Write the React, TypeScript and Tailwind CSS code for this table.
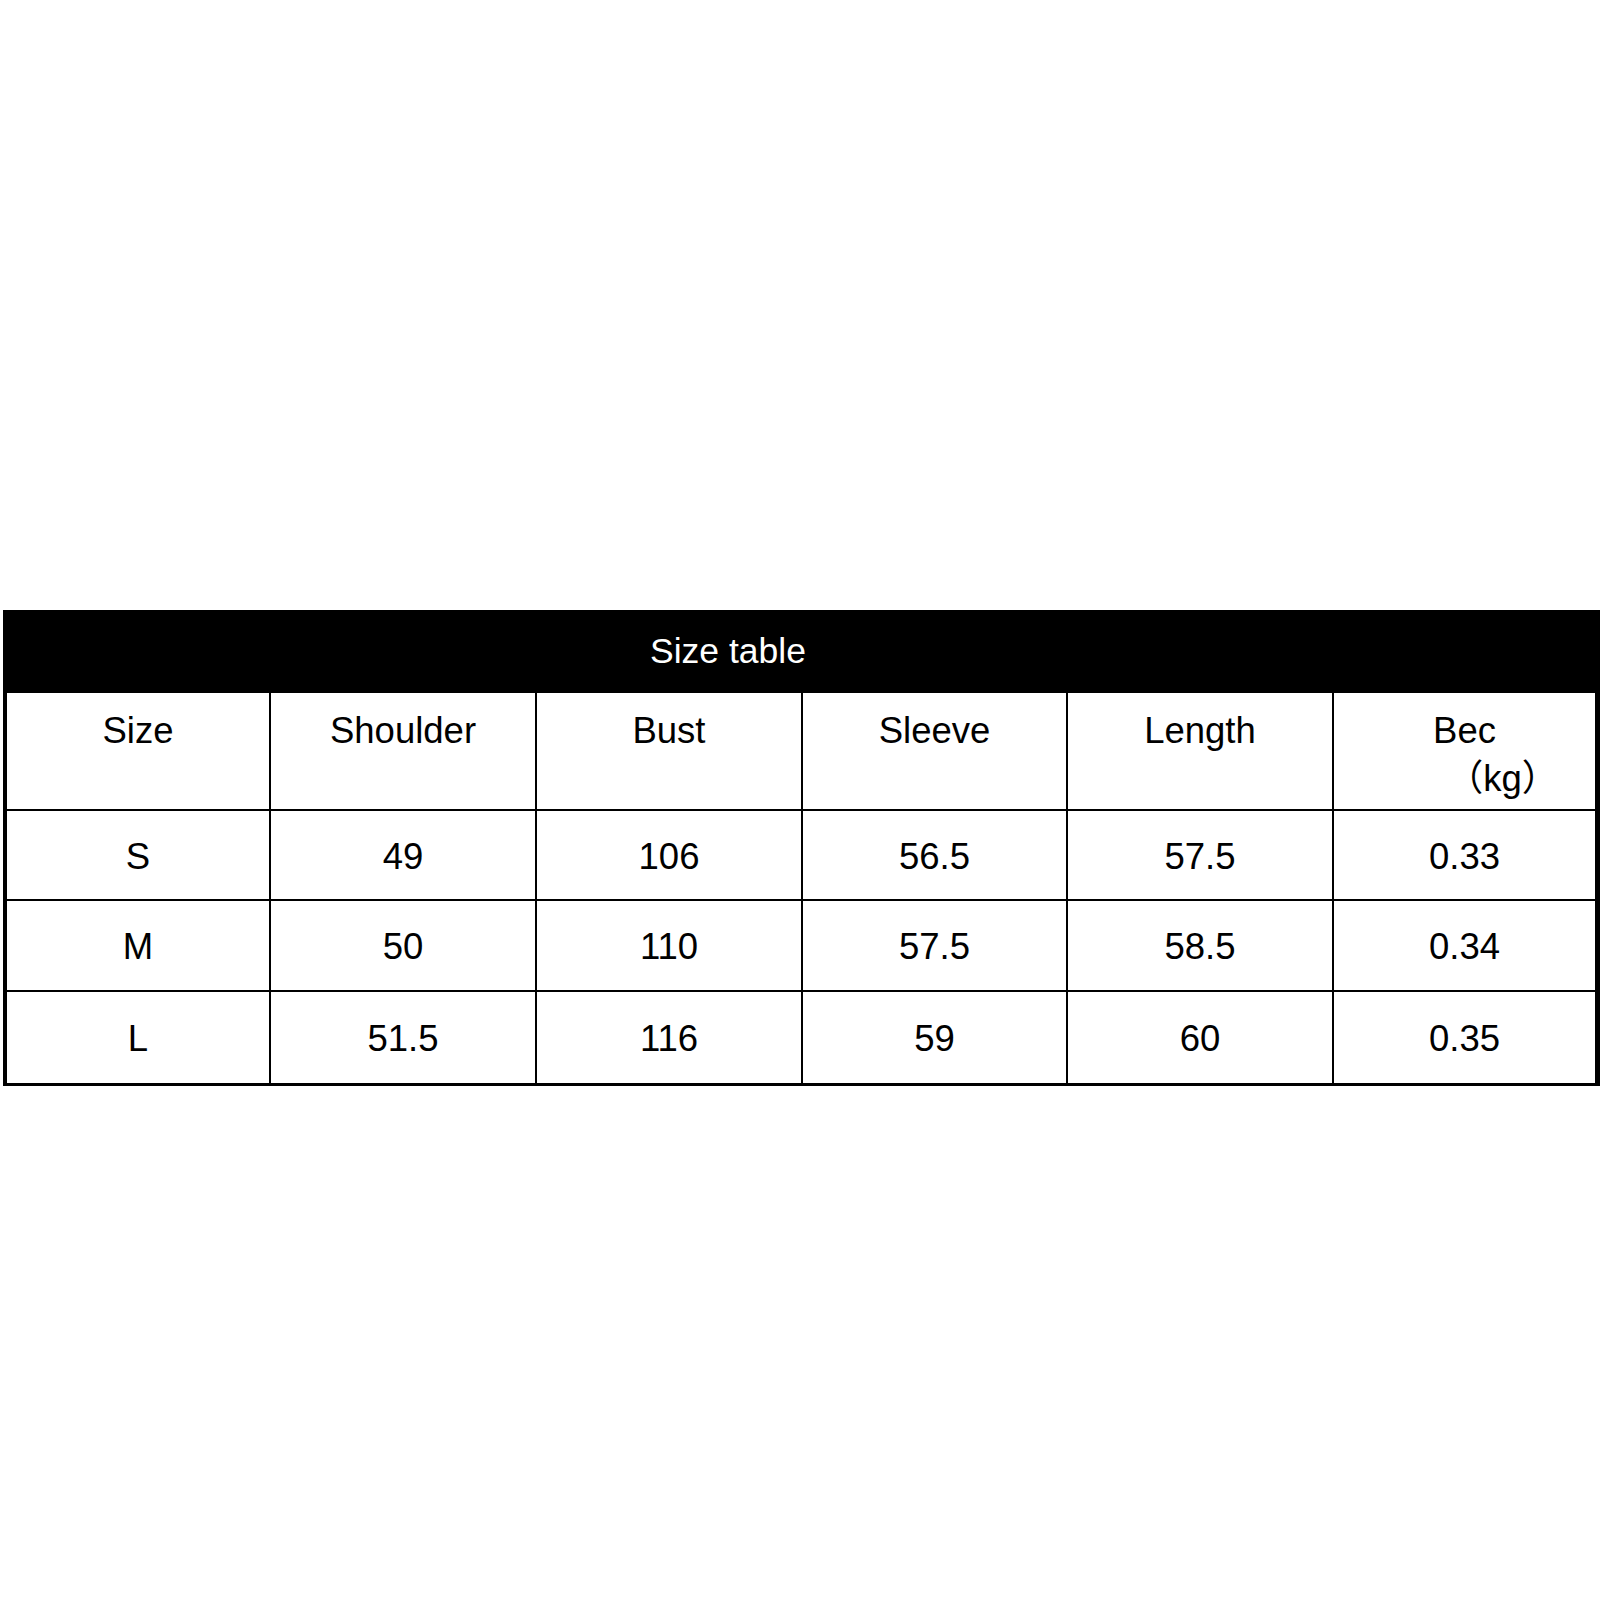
import React from "react";

const cols = ["w-[264px]", "w-[266px]", "w-[266px]", "w-[265px]", "w-[266px]", "w-[261px]"];

const rows = [
  ["S", "49", "106", "56.5", "57.5", "0.33"],
  ["M", "50", "110", "57.5", "58.5", "0.34"],
  ["L", "51.5", "116", "59", "60", "0.35"],
];

const rowHeights = ["h-[90px]", "h-[91px]", "h-[91px]"];

const cjk = { fontFamily: '"Noto Sans CJK SC", sans-serif' };

export default function App() {
  return (
    <div
      className="w-[1600px] h-[1600px] bg-white pt-[610px] pl-[3px] text-black"
      style={{ fontFamily: '"Liberation Sans", Arial, sans-serif' }}
    >
      <div className="w-[1597px] border-l-4 border-r-[5px] border-b-[3px] border-black">
        <div className="h-[83px] bg-black flex items-center justify-center pr-[146px] text-white text-[35.5px] leading-none">
          Size table
        </div>
        <div className="flex h-[118px] border-b-2 border-black">
          {["Size", "Shoulder", "Bust", "Sleeve", "Length"].map((h, i) => (
            <div
              key={h}
              className={`${cols[i]} border-r-2 border-black pt-[15px] text-center text-[36.5px] leading-[45px]`}
            >
              {h}
            </div>
          ))}
          <div className={`${cols[5]} pt-[15px] text-center text-[36.5px] leading-[45px] flex flex-col items-center`}>
            <span>Bec</span>
            <span className="pl-[76px] whitespace-nowrap">
              <span style={cjk}>（</span>kg<span style={cjk}>）</span>
            </span>
          </div>
        </div>
        {rows.map((r, ri) => (
          <div
            key={ri}
            className={`flex ${rowHeights[ri]} ${ri < 2 ? "border-b-2 border-black" : ""}`}
          >
            {r.map((c, ci) => (
              <div
                key={ci}
                className={`${cols[ci]} ${ci < 5 ? "border-r-2 border-black" : ""} flex items-center justify-center text-[36.5px] leading-none pt-[4px]`}
              >
                {c}
              </div>
            ))}
          </div>
        ))}
      </div>
    </div>
  );
}
